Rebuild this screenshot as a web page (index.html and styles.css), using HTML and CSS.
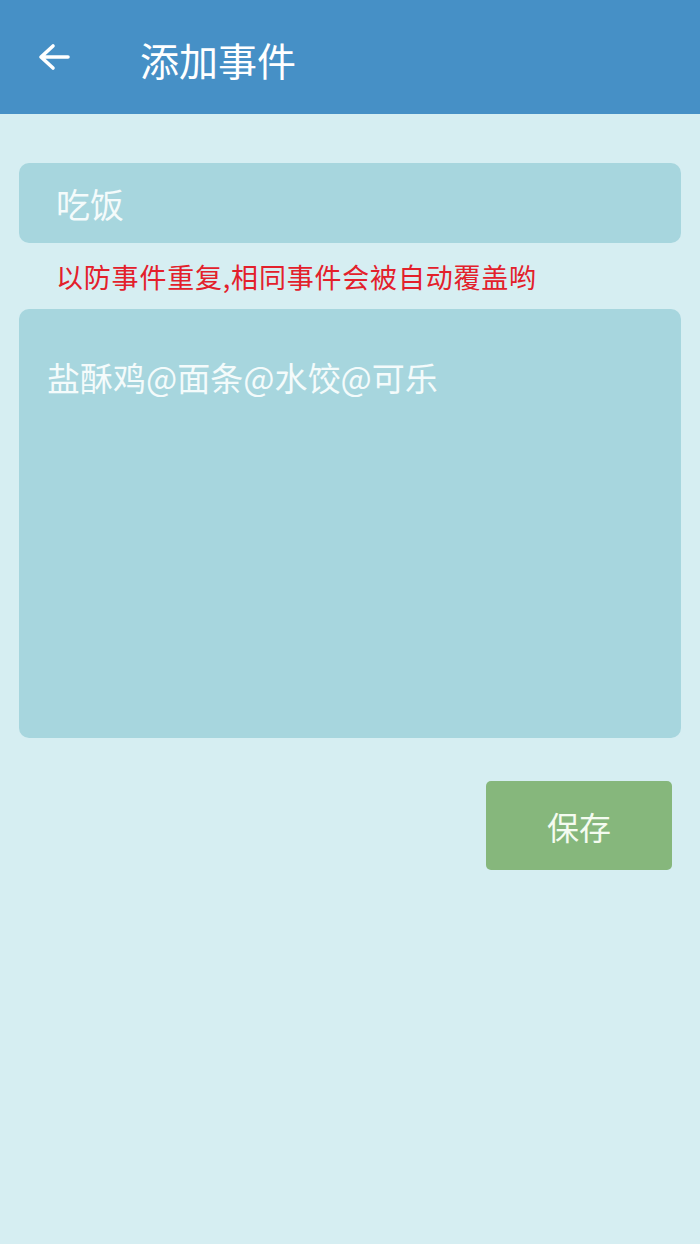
FILE: index.html
```html
<!DOCTYPE html>
<html lang="zh-CN">
<head>
    <meta charset="UTF-8">
    <meta name="viewport" content="width=device-width, initial-scale=1.0">
    <title>添加事件</title>
    <link rel="stylesheet" href="styles.css">
</head>
<body>

    <!-- 顶部栏 -->
    <div class="toolbar">
        <span class="back">
            <svg width="34" height="30" viewBox="0 0 34 30">
                <path d="M31 15 H5 M16 4 L4 15 L16 26" fill="none" stroke="white" stroke-width="3.6" stroke-linecap="round" stroke-linejoin="round"/>
            </svg>
        </span>
        <span class="title">添加事件</span>
    </div>

    <div class="content">
        <div class="field name-field">吃饭</div>
        <div class="hint">以防事件重复,相同事件会被自动覆盖哟</div>
        <div class="field items-field">盐酥鸡@面条@水饺@可乐</div>

        <div class="actions">
            <button class="save">保存</button>
        </div>
    </div>

</body>
</html>
```

FILE: styles.css
```css
body {
    margin: 0;
    background-color: #d6eef2;
    font-family: "Noto Sans CJK SC", "Noto Sans", sans-serif;
}

.toolbar {
    height: 114px;
    background-color: #4690c6;
    display: flex;
    align-items: center;
}

.back {
    display: flex;
    margin-left: 37px;
    width: 34px;
}

.title {
    margin-left: 69px;
    margin-top: 4px;
    font-size: 39px;
    color: white;
}

.content {
    padding: 49px 19px 0 19px;
}

.field {
    background-color: #a7d6de;
    border-radius: 10px;
    color: #f4fbfb;
}

.name-field {
    height: 80px;
    display: flex;
    align-items: center;
    padding-left: 37px;
    font-size: 34px;
}

.hint {
    color: #e3202b;
    font-size: 27px;
    letter-spacing: 0.8px;
    padding-left: 37px;
    height: 66px;
    display: flex;
    align-items: center;
}

.items-field {
    height: 429px;
    box-sizing: border-box;
    padding: 44px 28px;
    font-size: 33px;
}

.actions {
    display: flex;
    justify-content: flex-end;
    padding-right: 9px;
    margin-top: 43px;
}

.save {
    width: 186px;
    height: 89px;
    border: none;
    border-radius: 5px;
    background-color: #86b77c;
    color: #f4fbf0;
    font-size: 32px;
    font-family: "Noto Sans CJK SC", sans-serif;
}
```
